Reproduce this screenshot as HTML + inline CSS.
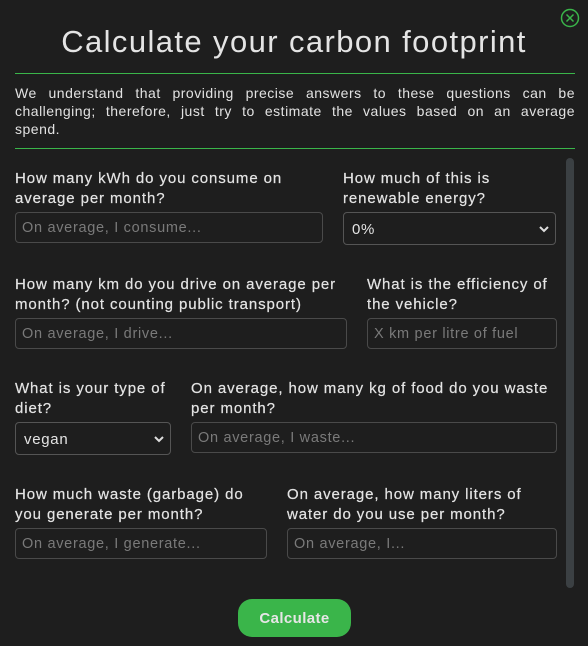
<!DOCTYPE html>
<html><head><style>
body{margin:0;width:588px;height:646px;background:#1e1e1e;font-family:"Liberation Sans",sans-serif;color:#e2e2e2;position:relative;overflow:hidden}
.a{position:absolute}
h1{position:absolute;left:0;width:588px;top:24px;margin:0;text-align:center;font-weight:400;font-size:31px;color:#e4e4e4;letter-spacing:1.4px}
.hr{position:absolute;left:15px;width:560px;height:1px;background:#3ab54a}
.p{position:absolute;left:15px;width:560px;margin:0;font-size:14px;line-height:18px;text-align:justify;text-align-last:justify;color:#e2e2e2;letter-spacing:0.5px;white-space:nowrap}
.l{position:absolute;font-size:15px;line-height:20px;color:#e4e4e4;letter-spacing:0.9px;-webkit-text-stroke:0.2px #e4e4e4}
.i{position:absolute;box-sizing:border-box;border:1px solid #4a4a4a;border-radius:4px;height:31px;font-size:14.5px;color:#7a7a7a;padding:7px 6px 5px;line-height:17px;white-space:nowrap;letter-spacing:0.7px}
.s{position:absolute;box-sizing:border-box;border:1px solid #555;border-radius:4px;height:33px;font-size:15px;color:#e4e4e4;padding:8px 8px 6px;line-height:18px;letter-spacing:0.7px}
.s svg{position:absolute;right:6px;top:12px}
</style></head><body>
<svg class="a" style="left:560px;top:8px" width="20" height="20"><circle cx="10" cy="10" r="8.5" fill="none" stroke="#3ab54a" stroke-width="1.5"/><path d="M6.5 6.5L13.5 13.5M13.5 6.5L6.5 13.5" stroke="#3ab54a" stroke-width="1.5"/></svg>
<h1>Calculate your carbon footprint</h1>
<div class="hr" style="top:73px"></div>
<div class="p" style="top:84px">We understand that providing precise answers to these questions can be</div>
<div class="p" style="top:102px">challenging; therefore, just try to estimate the values based on an average</div>
<div class="p" style="top:120px;text-align-last:left">spend.</div>
<div class="hr" style="top:148px"></div>
<div class="a" style="left:566px;top:158px;width:8px;height:430px;background:#3b4043;border-radius:4px"></div>

<div class="l" style="left:15px;top:169px">How many kWh do you consume on<br>average per month?</div>
<div class="l" style="left:343px;top:169px">How much of this is<br>renewable energy?</div>
<div class="i" style="left:15px;top:212px;width:308px">On average, I consume...</div>
<div class="s" style="left:343px;top:212px;width:213px">0%<svg width="10" height="8"><path d="M1 2L5 6L9 2" stroke="#ddd" stroke-width="2" fill="none"/></svg></div>

<div class="l" style="left:15px;top:275px">How many km do you drive on average per<br>month? (not counting public transport)</div>
<div class="l" style="left:367px;top:275px">What is the efficiency of<br>the vehicle?</div>
<div class="i" style="left:15px;top:318px;width:332px">On average, I drive...</div>
<div class="i" style="left:367px;top:318px;width:190px">X km per litre of fuel</div>

<div class="l" style="left:15px;top:379px">What is your type of<br>diet?</div>
<div class="l" style="left:191px;top:379px">On average, how many kg of food do you waste<br>per month?</div>
<div class="s" style="left:15px;top:422px;width:156px">vegan<svg width="10" height="8"><path d="M1 2L5 6L9 2" stroke="#ddd" stroke-width="2" fill="none"/></svg></div>
<div class="i" style="left:191px;top:422px;width:366px">On average, I waste...</div>

<div class="l" style="left:15px;top:485px">How much waste (garbage) do<br>you generate per month?</div>
<div class="l" style="left:287px;top:485px">On average, how many liters of<br>water do you use per month?</div>
<div class="i" style="left:15px;top:528px;width:252px">On average, I generate...</div>
<div class="i" style="left:287px;top:528px;width:270px">On average, I...</div>

<div class="a" style="left:238px;top:599px;width:113px;height:38px;background:#3ab54a;border-radius:14px;text-align:center;line-height:39px;font-size:15px;font-weight:bold;color:#e6e6e6;letter-spacing:0.4px">Calculate</div>
</body></html>
